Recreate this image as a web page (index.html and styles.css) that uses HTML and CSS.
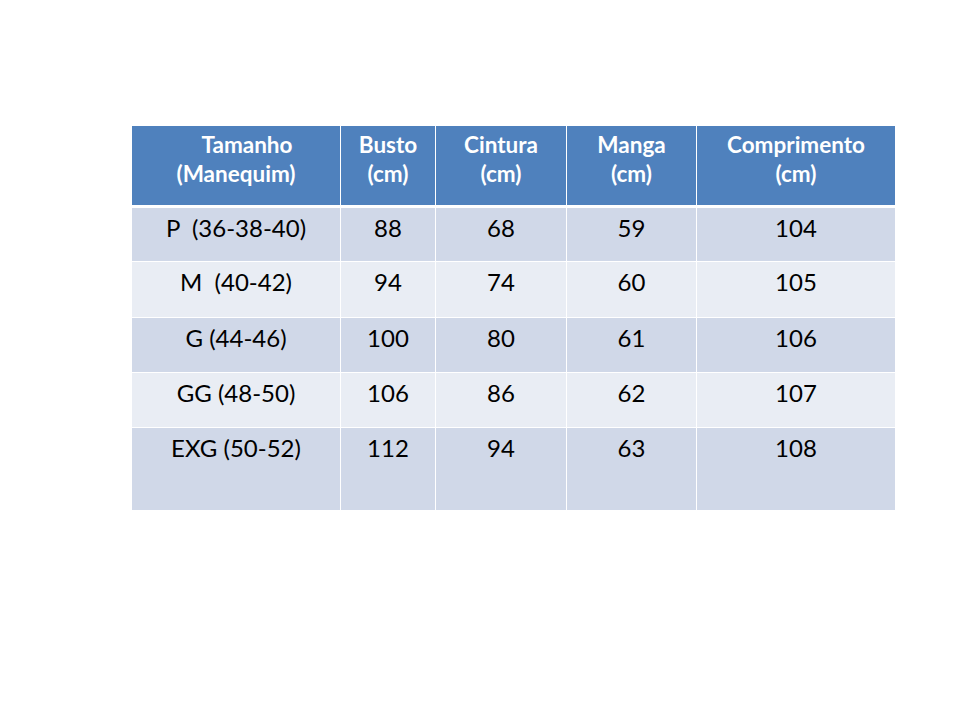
FILE: index.html
```html
<!DOCTYPE html>
<html lang="pt">
<head>
<meta charset="utf-8">
<title>Tabela de medidas</title>
<link rel="stylesheet" href="styles.css">
</head>
<body>
<div class="slide">
  <table class="sizes">
    <colgroup>
      <col class="c1"><col class="c2"><col class="c3"><col class="c4"><col class="c5">
    </colgroup>
    <thead>
      <tr>
        <th><span class="indent">Tamanho</span><br>(Manequim)</th>
        <th>Busto<br>(cm)</th>
        <th>Cintura<br>(cm)</th>
        <th>Manga<br>(cm)</th>
        <th>Comprimento<br>(cm)</th>
      </tr>
    </thead>
    <tbody>
      <tr class="odd r1"><td class="pre">P  (36-38-40)</td><td>88</td><td>68</td><td>59</td><td>104</td></tr>
      <tr class="even r2"><td class="pre">M  (40-42)</td><td>94</td><td>74</td><td>60</td><td>105</td></tr>
      <tr class="odd r3"><td>G (44-46)</td><td>100</td><td>80</td><td>61</td><td>106</td></tr>
      <tr class="even r4"><td>GG (48-50)</td><td>106</td><td>86</td><td>62</td><td>107</td></tr>
      <tr class="odd r5"><td>EXG (50-52)</td><td>112</td><td>94</td><td>63</td><td>108</td></tr>
    </tbody>
  </table>
</div>
</body>
</html>
```
FILE: styles.css
```css
html, body {
  margin: 0;
  padding: 0;
  background: #ffffff;
}

.slide {
  width: 960px;
  height: 720px;
  box-sizing: border-box;
  padding: 126px 0 0 132px;
  font-family: Lato, "Open Sans", "Liberation Sans", sans-serif;
}

.sizes {
  border-collapse: separate;
  border-spacing: 0;
  table-layout: fixed;
  width: 763px;
}

.c1 { width: 209px; }
.c2 { width: 95px; }
.c3 { width: 131px; }
.c4 { width: 130px; }
.c5 { width: 198px; }

.sizes th,
.sizes td {
  box-sizing: border-box;
  border-right: 1px solid #ffffff;
  border-bottom: 1px solid #ffffff;
  text-align: center;
  vertical-align: top;
  padding: 0 2px;
}

.sizes th:last-child,
.sizes td:last-child {
  border-right: none;
}

.sizes th {
  background: #4f81bd;
  color: #ffffff;
  font-weight: 700;
  font-size: 22.5px;
  line-height: 29px;
  height: 82px;
  padding-top: 4px;
  border-bottom: 3px solid #ffffff;
}

.indent {
  padding-left: 22px;
}

.sizes td {
  color: #000000;
  font-size: 24px;
  line-height: 28px;
  padding-top: 6px;
}

.pre {
  white-space: pre;
}

.odd td { background: #d0d8e8; }
.even td { background: #e9edf4; }

.r1 td { height: 54px; }
.r2 td { height: 56px; }
.r3 td { height: 55px; }
.r4 td { height: 55px; }
.r5 td { height: 82px; border-bottom: none; }
```
